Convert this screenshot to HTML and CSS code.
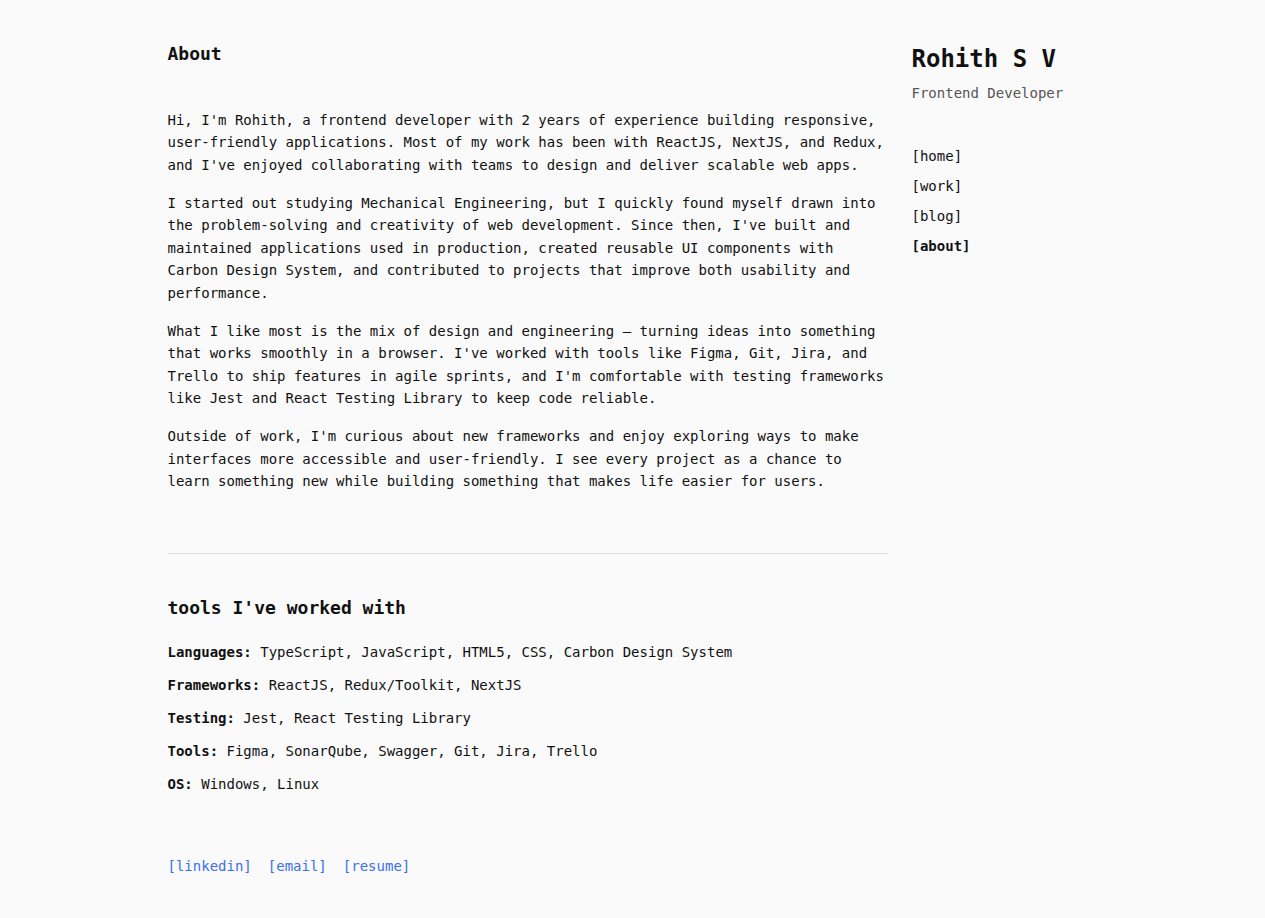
FILE: index.html
```html
<!DOCTYPE html>
<html lang="en">
<head>
<meta charset="utf-8">
<title>Rohith S V — About</title>
<link rel="stylesheet" href="styles.css">
</head>
<body>
<div class="page">
  <main class="main">
    <h1 class="page-title">About</h1>
    <section class="intro">
      <p>Hi, I'm Rohith, a frontend developer with 2 years of experience building responsive, user-friendly applications. Most of my work has been with ReactJS, NextJS, and Redux, and I've enjoyed collaborating with teams to design and deliver scalable web apps.</p>
      <p>I started out studying Mechanical Engineering, but I quickly found myself drawn into the problem-solving and creativity of web development. Since then, I've built and maintained applications used in production, created reusable UI components with Carbon Design System, and contributed to projects that improve both usability and performance.</p>
      <p>What I like most is the mix of design and engineering — turning ideas into something that works smoothly in a browser. I've worked with tools like Figma, Git, Jira, and Trello to ship features in agile sprints, and I'm comfortable with testing frameworks like Jest and React Testing Library to keep code reliable.</p>
      <p>Outside of work, I'm curious about new frameworks and enjoy exploring ways to make interfaces more accessible and user-friendly. I see every project as a chance to learn something new while building something that makes life easier for users.</p>
    </section>
    <hr class="divider">
    <section class="tools">
      <h2 class="section-title">tools I've worked with</h2>
      <p class="tool-row"><strong>Languages:</strong> TypeScript, JavaScript, HTML5, CSS, Carbon Design System</p>
      <p class="tool-row"><strong>Frameworks:</strong> ReactJS, Redux/Toolkit, NextJS</p>
      <p class="tool-row"><strong>Testing:</strong> Jest, React Testing Library</p>
      <p class="tool-row"><strong>Tools:</strong> Figma, SonarQube, Swagger, Git, Jira, Trello</p>
      <p class="tool-row"><strong>OS:</strong> Windows, Linux</p>
    </section>
    <nav class="links">
      <a href="#">[linkedin]</a>
      <a href="#">[email]</a>
      <a href="#">[resume]</a>
    </nav>
  </main>
  <aside class="sidebar">
    <div class="name">Rohith S V</div>
    <div class="role">Frontend Developer</div>
    <nav class="menu">
      <a href="#">[home]</a>
      <a href="#">[work]</a>
      <a href="#">[blog]</a>
      <a href="#" class="active">[about]</a>
    </nav>
  </aside>
</div>
</body>
</html>
```
FILE: styles.css
```css
* { box-sizing: border-box; }

html, body {
  margin: 0;
  padding: 0;
  background: #fafafa;
}

body {
  font-family: "DejaVu Sans Mono", "Liberation Mono", monospace;
  font-size: 14px;
  line-height: 1.6;
  color: #111;
}

.page {
  display: flex;
  gap: 24px;
  max-width: 960px;
  margin: 0 auto;
  padding: 40px 16px 40px 15px;
}

.main {
  width: 720px;
  flex-shrink: 0;
}

.page-title {
  font-size: 18px;
  font-weight: bold;
  line-height: 28.8px;
  margin: 0 0 40px;
}

.intro p {
  margin: 0 0 16px;
}

.divider {
  border: 0;
  border-top: 1px solid #ddd;
  margin: 60px 0 40px;
}

.section-title {
  font-size: 18px;
  font-weight: bold;
  line-height: 28.8px;
  margin: 0 0 19px;
}

.tool-row {
  margin: 0 0 10.6px;
}

.links {
  display: flex;
  gap: 16px;
  margin-top: 59px;
}

.links a {
  color: #3a6ff0;
  text-decoration: none;
}

.sidebar {
  flex: 1;
  padding-top: 4px;
}

.name {
  font-size: 24px;
  font-weight: bold;
  line-height: 30px;
}

.role {
  color: #555;
  margin-top: 8px;
}

.menu {
  display: flex;
  flex-direction: column;
  gap: 7.6px;
  margin-top: 41px;
}

.menu a {
  color: #111;
  text-decoration: none;
}

.menu a.active {
  font-weight: bold;
}
```
